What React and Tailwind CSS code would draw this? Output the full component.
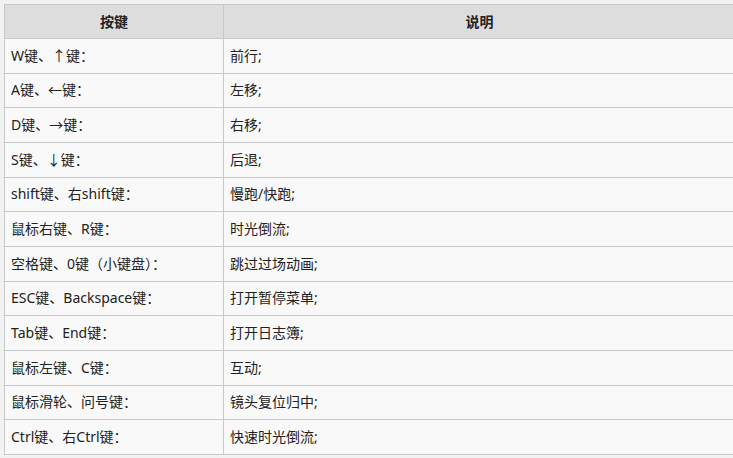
const rows = [
  ['W键、↑键：', '前行;'],
  ['A键、←键：', '左移;'],
  ['D键、→键：', '右移;'],
  ['S键、↓键：', '后退;'],
  ['shift键、右shift键：', '慢跑/快跑;'],
  ['鼠标右键、R键：', '时光倒流;'],
  ['空格键、0键（小键盘）：', '跳过过场动画;'],
  ['ESC键、Backspace键：', '打开暂停菜单;'],
  ['Tab键、End键：', '打开日志簿;'],
  ['鼠标左键、C键：', '互动;'],
  ['鼠标滑轮、问号键：', '镜头复位归中;'],
  ['Ctrl键、右Ctrl键：', '快速时光倒流;'],
];

export default function App() {
  return (
    <div className="w-[733px] h-[458px] overflow-hidden bg-[#f2f2f2] pt-1 pl-1 font-['Noto_Sans','Noto_Sans_CJK_SC',sans-serif] text-[14px] text-[#222]">
      <table className="w-[732px] border-collapse table-fixed">
        <colgroup>
          <col className="w-[219px]" />
          <col />
        </colgroup>
        <thead>
          <tr className="h-[34px] bg-[#dddddd]">
            <th className="border border-[#c8c8c8] font-bold text-center">按键</th>
            <th className="border border-[#c8c8c8] font-bold text-center">说明</th>
          </tr>
        </thead>
        <tbody>
          {rows.map(([k, d], i) => (
            <tr key={i} className="h-[34.67px] bg-[#f9f9f9]">
              <td className="border border-[#c8c8c8] px-[6px] whitespace-nowrap leading-none">{k}</td>
              <td className="border border-[#c8c8c8] px-[6px] whitespace-nowrap leading-none">{d}</td>
            </tr>
          ))}
        </tbody>
      </table>
    </div>
  );
}
